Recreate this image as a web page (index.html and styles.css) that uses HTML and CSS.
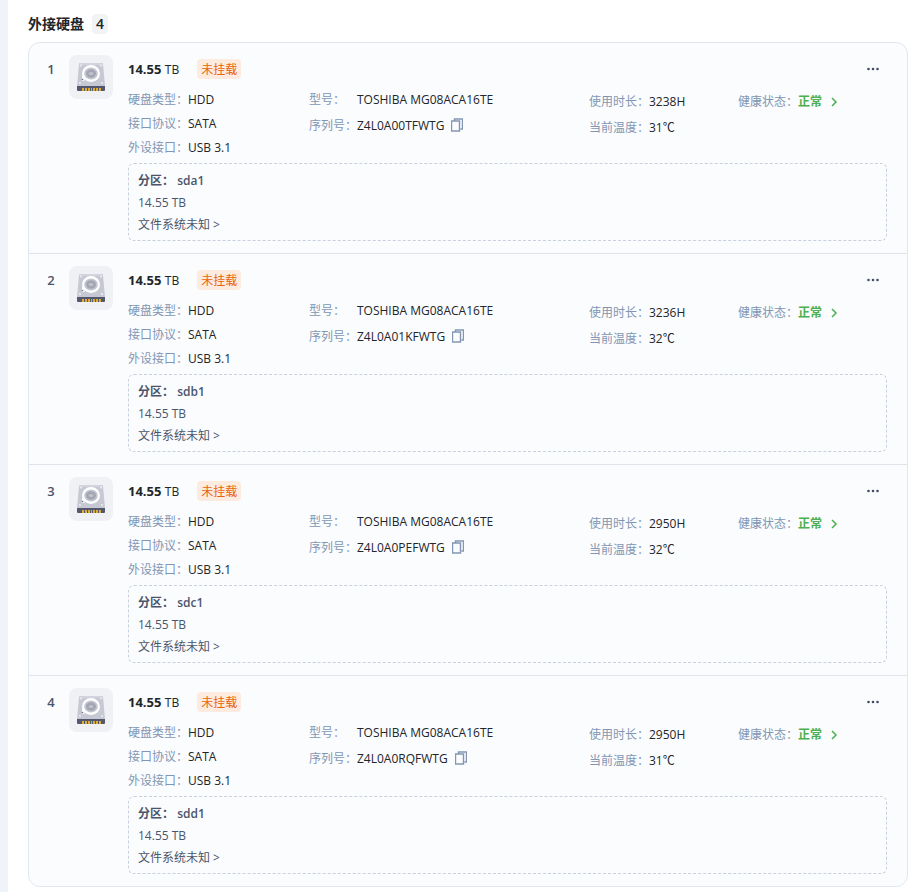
FILE: index.html
```html
<!DOCTYPE html>
<html lang="zh-CN">
<head>
  <meta charset="UTF-8">
  <meta name="viewport" content="width=device-width, initial-scale=1.0">
  <title>外接硬盘</title>
  <link rel="stylesheet" href="styles.css">
</head>
<body>
  <!-- Shared icons -->
  <svg class="sprite" aria-hidden="true">
    <symbol id="icon-disk" viewBox="0 0 30 30">
      <path d="M4 1h22q1 0 1 1l2 22H1L3 2q0-1 1-1z" fill="#c6c8d3"/>
      <path d="M4 1h22q1 0 1 1v1H3V2q0-1 1-1z" fill="#d2d3dc"/>
      <path d="M1 24h28v4a1 1 0 0 1-1 1H2a1 1 0 0 1-1-1z" fill="#54586f"/>
      <path d="M6 26h2v3H6zM9 26h2v3H9zM12 26h2v3h-2zM15 26h1v3h-1zM17 26h2v3h-2zM20 26h2v3h-2zM23 26h2v3h-2z" fill="#dcae35"/>
      <ellipse cx="15" cy="11.500" rx="9" ry="8.500" fill="#fff"/>
      <ellipse cx="15" cy="11.500" rx="6.800" ry="6" fill="#c3c6d0"/>
      <ellipse cx="15" cy="11.500" rx="5" ry="4.200" fill="#a3a6b2"/>
      <ellipse cx="15" cy="11.500" rx="2.500" ry="1.600" fill="#c0c2cc"/>
      <path d="M6 13l3 5.500-3 .5z" fill="#fff"/>
      <circle cx="6.500" cy="17.500" r=".8" fill="#6d7080"/>
      <g fill="#f4f4f7">
        <circle cx="5" cy="3.500" r=".9"/>
        <circle cx="25" cy="3.500" r=".9"/>
        <circle cx="4" cy="21" r=".9"/>
        <circle cx="26" cy="21" r=".9"/>
      </g>
    </symbol>
    <symbol id="icon-copy" viewBox="0 0 12 14">
      <path d="M3.500 3V1h8v10h-2M.5 3h8v10h-8z" fill="none" stroke="currentColor" stroke-width="1.400"/>
    </symbol>
    <symbol id="icon-arrow" viewBox="0 0 8 10">
      <path d="M2 1l4 4-4 4" fill="none" stroke="currentColor" stroke-width="1.500"/>
    </symbol>
    <symbol id="icon-more" viewBox="0 0 14 4">
      <circle cx="2.500" cy="2" r="1.300"/>
      <circle cx="7" cy="2" r="1.300"/>
      <circle cx="11.500" cy="2" r="1.300"/>
    </symbol>
  </svg>

  <main class="page">
    <h1 class="page-title">外接硬盘 <span class="count">4</span></h1>

    <ol class="disk-list">
      <li class="disk">
        <span class="disk-index">1</span>
        <span class="disk-icon"><svg><use href="#icon-disk"/></svg></span>
        <div class="disk-body">
          <div class="disk-head">
            <span class="size">14.55 <small>TB</small></span>
            <span class="tag">未挂载</span>
            <button class="more" type="button" aria-label="更多"><svg><use href="#icon-more"/></svg></button>
          </div>
          <div class="info">
            <dl>
              <div><dt>硬盘类型：</dt><dd>HDD</dd></div>
              <div><dt>接口协议：</dt><dd>SATA</dd></div>
              <div><dt>外设接口：</dt><dd>USB 3.1</dd></div>
            </dl>
            <dl class="model">
              <div><dt>型号：</dt><dd>TOSHIBA MG08ACA16TE</dd></div>
              <div><dt>序列号：</dt><dd>Z4L0A00TFWTG</dd><button class="copy" type="button" aria-label="复制"><svg><use href="#icon-copy"/></svg></button></div>
            </dl>
            <dl class="usage">
              <div><dt>使用时长：</dt><dd>3238H</dd></div>
              <div><dt>当前温度：</dt><dd>31℃</dd></div>
            </dl>
            <dl class="usage">
              <div><dt>健康状态：</dt><dd><a class="health" href="#">正常 <svg><use href="#icon-arrow"/></svg></a></dd></div>
            </dl>
          </div>
          <div class="partition">
            <p class="partition-name">分区： <span>sda1</span></p>
            <p>14.55 TB</p>
            <p><a href="#">文件系统未知 &gt;</a></p>
          </div>
        </div>
      </li>

      <li class="disk">
        <span class="disk-index">2</span>
        <span class="disk-icon"><svg><use href="#icon-disk"/></svg></span>
        <div class="disk-body">
          <div class="disk-head">
            <span class="size">14.55 <small>TB</small></span>
            <span class="tag">未挂载</span>
            <button class="more" type="button" aria-label="更多"><svg><use href="#icon-more"/></svg></button>
          </div>
          <div class="info">
            <dl>
              <div><dt>硬盘类型：</dt><dd>HDD</dd></div>
              <div><dt>接口协议：</dt><dd>SATA</dd></div>
              <div><dt>外设接口：</dt><dd>USB 3.1</dd></div>
            </dl>
            <dl class="model">
              <div><dt>型号：</dt><dd>TOSHIBA MG08ACA16TE</dd></div>
              <div><dt>序列号：</dt><dd>Z4L0A01KFWTG</dd><button class="copy" type="button" aria-label="复制"><svg><use href="#icon-copy"/></svg></button></div>
            </dl>
            <dl class="usage">
              <div><dt>使用时长：</dt><dd>3236H</dd></div>
              <div><dt>当前温度：</dt><dd>32℃</dd></div>
            </dl>
            <dl class="usage">
              <div><dt>健康状态：</dt><dd><a class="health" href="#">正常 <svg><use href="#icon-arrow"/></svg></a></dd></div>
            </dl>
          </div>
          <div class="partition">
            <p class="partition-name">分区： <span>sdb1</span></p>
            <p>14.55 TB</p>
            <p><a href="#">文件系统未知 &gt;</a></p>
          </div>
        </div>
      </li>

      <li class="disk">
        <span class="disk-index">3</span>
        <span class="disk-icon"><svg><use href="#icon-disk"/></svg></span>
        <div class="disk-body">
          <div class="disk-head">
            <span class="size">14.55 <small>TB</small></span>
            <span class="tag">未挂载</span>
            <button class="more" type="button" aria-label="更多"><svg><use href="#icon-more"/></svg></button>
          </div>
          <div class="info">
            <dl>
              <div><dt>硬盘类型：</dt><dd>HDD</dd></div>
              <div><dt>接口协议：</dt><dd>SATA</dd></div>
              <div><dt>外设接口：</dt><dd>USB 3.1</dd></div>
            </dl>
            <dl class="model">
              <div><dt>型号：</dt><dd>TOSHIBA MG08ACA16TE</dd></div>
              <div><dt>序列号：</dt><dd>Z4L0A0PEFWTG</dd><button class="copy" type="button" aria-label="复制"><svg><use href="#icon-copy"/></svg></button></div>
            </dl>
            <dl class="usage">
              <div><dt>使用时长：</dt><dd>2950H</dd></div>
              <div><dt>当前温度：</dt><dd>32℃</dd></div>
            </dl>
            <dl class="usage">
              <div><dt>健康状态：</dt><dd><a class="health" href="#">正常 <svg><use href="#icon-arrow"/></svg></a></dd></div>
            </dl>
          </div>
          <div class="partition">
            <p class="partition-name">分区： <span>sdc1</span></p>
            <p>14.55 TB</p>
            <p><a href="#">文件系统未知 &gt;</a></p>
          </div>
        </div>
      </li>

      <li class="disk">
        <span class="disk-index">4</span>
        <span class="disk-icon"><svg><use href="#icon-disk"/></svg></span>
        <div class="disk-body">
          <div class="disk-head">
            <span class="size">14.55 <small>TB</small></span>
            <span class="tag">未挂载</span>
            <button class="more" type="button" aria-label="更多"><svg><use href="#icon-more"/></svg></button>
          </div>
          <div class="info">
            <dl>
              <div><dt>硬盘类型：</dt><dd>HDD</dd></div>
              <div><dt>接口协议：</dt><dd>SATA</dd></div>
              <div><dt>外设接口：</dt><dd>USB 3.1</dd></div>
            </dl>
            <dl class="model">
              <div><dt>型号：</dt><dd>TOSHIBA MG08ACA16TE</dd></div>
              <div><dt>序列号：</dt><dd>Z4L0A0RQFWTG</dd><button class="copy" type="button" aria-label="复制"><svg><use href="#icon-copy"/></svg></button></div>
            </dl>
            <dl class="usage">
              <div><dt>使用时长：</dt><dd>2950H</dd></div>
              <div><dt>当前温度：</dt><dd>31℃</dd></div>
            </dl>
            <dl class="usage">
              <div><dt>健康状态：</dt><dd><a class="health" href="#">正常 <svg><use href="#icon-arrow"/></svg></a></dd></div>
            </dl>
          </div>
          <div class="partition">
            <p class="partition-name">分区： <span>sdd1</span></p>
            <p>14.55 TB</p>
            <p><a href="#">文件系统未知 &gt;</a></p>
          </div>
        </div>
      </li>
    </ol>
  </main>
</body>
</html>
```
FILE: styles.css
```css
/* General Styles */
* {
  box-sizing: border-box;
}

body {
  margin: 0;
  font-family: "Open Sans", "Noto Sans CJK SC", sans-serif;
  font-size: 12px;
  line-height: 24px;
  color: #222529;
  background-color: #fff;
}

h1, ol, dl, dd, p {
  margin: 0;
  padding: 0;
}

a {
  color: inherit;
  text-decoration: none;
}

button {
  display: flex;
  align-items: center;
  justify-content: center;
  padding: 0;
  border: none;
  background: none;
  cursor: pointer;
}

.sprite {
  display: none;
}

/* Page */
.page {
  min-height: 100vh;
  padding: 14px 1px 5px 20px;
  border-left: 8px solid #f0f4f9;
}

.page-title {
  display: flex;
  align-items: center;
  gap: 8px;
  margin-bottom: 8px;
  font-size: 14px;
  line-height: 20px;
}

.count {
  width: 16px;
  border-radius: 4px;
  background-color: #f2f3f5;
  font-weight: 600;
  text-align: center;
}

/* Disk List */
.disk-list {
  border: 1px solid #e1e7f0;
  border-radius: 12px;
  background-color: #fbfcfe;
  list-style: none;
}

.disk {
  display: flex;
  padding: 12px 20px 12px 12px;
}

.disk + .disk {
  border-top: 1px solid #e1e5eb;
}

.disk-index {
  width: 20px;
  margin-right: 8px;
  font-size: 13px;
  font-weight: 600;
  line-height: 28px;
  text-align: center;
  color: #4a556b;
}

.disk-icon {
  display: flex;
  align-items: center;
  justify-content: center;
  width: 44px;
  height: 44px;
  margin-right: 15px;
  border-radius: 8px;
  background-color: #f0f1f5;
}

.disk-icon svg {
  width: 30px;
  height: 30px;
}

.disk-body {
  flex: 1;
}

.disk-head {
  display: flex;
  align-items: center;
  height: 28px;
  margin-bottom: 5px;
}

.size {
  font-size: 13px;
  font-weight: 700;
}

.size small {
  font-size: 12px;
  font-weight: 400;
}

.tag {
  height: 20px;
  margin-left: 18px;
  padding: 0 4px;
  border-radius: 4px;
  background-color: #fdebe0;
  line-height: 22px;
  color: #e8640c;
}

.more {
  width: 28px;
  height: 28px;
  margin-left: auto;
}

.more svg {
  width: 14px;
  height: 4px;
  fill: #434d66;
}

/* Disk Info */
.info {
  display: grid;
  grid-template-columns: 181fr 280fr 149fr 149fr;
  margin-bottom: 3px;
}

.info dl > div {
  display: flex;
}

.info dt {
  width: 60px;
  color: #8296b3;
}

.model dt {
  width: 48px;
}

.model,
.usage {
  display: flex;
  flex-direction: column;
  gap: 2px;
}

.usage {
  padding-top: 2px;
}

.copy {
  height: 22px;
  margin-left: 7px;
  color: #8296b3;
}

.copy svg {
  width: 12px;
  height: 14px;
}

.health {
  display: flex;
  align-items: center;
  gap: 8px;
  font-weight: 700;
  color: #4caf50;
}

.health svg {
  width: 8px;
  height: 10px;
}

/* Partition */
.partition {
  padding: 6px 9px 4px;
  border: 1px dashed #c8d0dc;
  border-radius: 6px;
  line-height: 22px;
  color: #4a556b;
}

.partition-name {
  font-weight: 700;
}

.partition-name span {
  font-weight: 600;
}
```
